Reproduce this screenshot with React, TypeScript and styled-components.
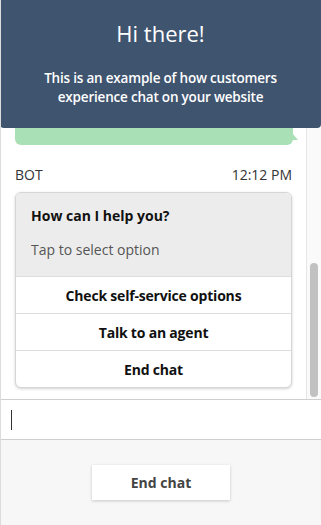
import styled, { createGlobalStyle } from "styled-components";

const GlobalStyle = createGlobalStyle`
  html, body {
    margin: 0;
    padding: 0;
    background: #ffffff;
  }
  body {
    font-family: "Open Sans", "Noto Sans", Arial, sans-serif;
    color: #333333;
  }
`;

const Widget = styled.div`
  width: 321px;
  height: 525px;
  display: flex;
  flex-direction: column;
  box-sizing: border-box;
  border-left: 1px solid #dcdcdc;
  overflow: hidden;
`;

const ChatArea = styled.div`
  position: relative;
  flex: 1;
  display: flex;
  min-height: 0;
  border-bottom: 1px solid #cfcfcf;
`;

const Banner = styled.div`
  position: absolute;
  top: 0;
  left: -1px;
  right: 0;
  height: 128px;
  box-sizing: border-box;
  background: #3f546f;
  border-radius: 0 0 4px 4px;
  color: #ffffff;
  text-align: center;
  padding-top: 18px;
  z-index: 2;
`;

const BannerTitle = styled.div`
  font-size: 22px;
  line-height: 30px;
  font-weight: 500;
`;

const BannerText = styled.div`
  margin-top: 21px;
  font-size: 13.5px;
  line-height: 19px;
  font-weight: 600;
  letter-spacing: -0.2px;
  padding: 0 20px;
`;

const Transcript = styled.div`
  flex: 1;
  display: flex;
  flex-direction: column;
  justify-content: flex-end;
  padding: 0 14px 11px 14px;
  overflow: hidden;
`;

const CustomerBubble = styled.div`
  position: relative;
  flex-shrink: 0;
  height: 60px;
  margin-right: -1px;
  background: #a9e0b5;
  border-radius: 6px;

  &::after {
    content: "";
    position: absolute;
    right: -5px;
    bottom: 5px;
    border-top: 7px solid transparent;
    border-left: 6px solid #a9e0b5;
  }
`;

const MetaRow = styled.div`
  display: flex;
  justify-content: space-between;
  margin-top: 20px;
  font-size: 14px;
  line-height: 20px;
  color: #333333;
`;

const Card = styled.div`
  margin-top: 7px;
  border: 1px solid #d6d6d6;
  border-radius: 6px;
  box-shadow: 0 1px 3px rgba(0, 0, 0, 0.18);
  overflow: hidden;
  background: #ffffff;
`;

const Prompt = styled.div`
  background: #ececec;
  padding: 13px 15px 16px;
  display: flex;
  flex-direction: column;
  gap: 14px;
`;

const PromptTitle = styled.div`
  font-size: 14px;
  line-height: 20px;
  font-weight: 700;
  color: #111111;
`;

const PromptHint = styled.div`
  font-size: 14px;
  line-height: 20px;
  color: #555555;
`;

const Option = styled.div`
  height: 36px;
  display: flex;
  align-items: center;
  justify-content: center;
  font-size: 14px;
  font-weight: 700;
  letter-spacing: -0.2px;
  color: #111111;
  border-top: 1px solid #dddddd;
`;

const ScrollTrack = styled.div`
  width: 15px;
  flex-shrink: 0;
  box-sizing: border-box;
  background: #fafafa;
  border-left: 1px solid #e6e6e6;
  display: flex;
  flex-direction: column;
  justify-content: flex-end;
  align-items: center;
  padding-bottom: 2px;
`;

const ScrollThumb = styled.div`
  width: 8px;
  height: 134px;
  border-radius: 4px;
  background: #c1c1c1;
`;

const InputRow = styled.div`
  height: 39px;
  display: flex;
  align-items: center;
  padding-left: 10px;
  border-bottom: 1px solid #cfcfcf;
  background: #ffffff;
`;

const Caret = styled.span`
  width: 1px;
  height: 20px;
  background: #333333;
`;

const Footer = styled.div`
  height: 85px;
  box-sizing: border-box;
  background: #f7f7f7;
  display: flex;
  justify-content: center;
  padding-top: 25px;
`;

const EndButton = styled.button`
  width: 138px;
  height: 35px;
  border: none;
  background: #ffffff;
  box-shadow: 0 1px 3px rgba(0, 0, 0, 0.2);
  font-family: inherit;
  font-size: 14px;
  font-weight: 700;
  color: #444444;
  cursor: pointer;
`;

const options = ["Check self-service options", "Talk to an agent", "End chat"];

export default function App() {
  return (
    <>
      <GlobalStyle />
      <Widget>
        <ChatArea>
          <Banner>
            <BannerTitle>Hi there!</BannerTitle>
            <BannerText>
              This is an example of how customers experience chat on your website
            </BannerText>
          </Banner>
          <Transcript>
            <CustomerBubble />
            <MetaRow>
              <span>BOT</span>
              <span>12:12 PM</span>
            </MetaRow>
            <Card>
              <Prompt>
                <PromptTitle>How can I help you?</PromptTitle>
                <PromptHint>Tap to select option</PromptHint>
              </Prompt>
              {options.map((label) => (
                <Option key={label}>{label}</Option>
              ))}
            </Card>
          </Transcript>
          <ScrollTrack>
            <ScrollThumb />
          </ScrollTrack>
        </ChatArea>
        <InputRow>
          <Caret />
        </InputRow>
        <Footer>
          <EndButton>End chat</EndButton>
        </Footer>
      </Widget>
    </>
  );
}
